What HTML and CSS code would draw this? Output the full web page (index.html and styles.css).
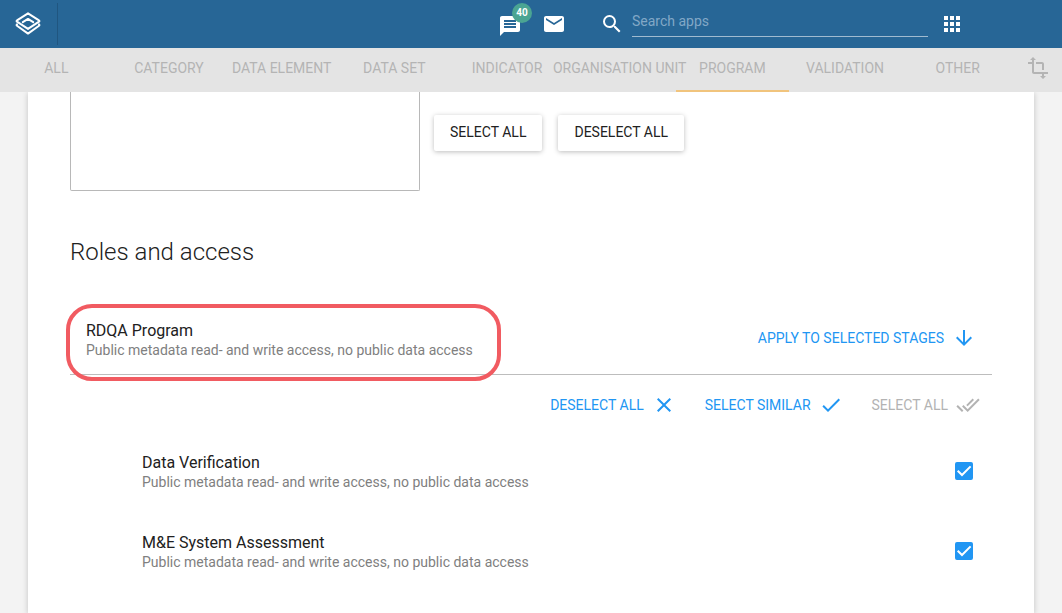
FILE: index.html
```html
<!DOCTYPE html>
<html lang="en">
<head>
<meta charset="utf-8">
<title>Metadata dependency export</title>
<link rel="stylesheet" href="styles.css">
</head>
<body>
<header class="topbar">
  <a class="logo" href="#" aria-label="Home">
    <svg width="28" height="28" viewBox="0 0 28 28" fill="none" stroke="#fff" stroke-width="2" stroke-linejoin="round" stroke-linecap="round"><path d="M14 3.300 25 10.300a.8.8 0 0 1 0 1.400L14 18.900 3 11.700a.8.8 0 0 1 0-1.400Z"/><path d="M8.800 12.200 14 8.900l5.200 3.300"/><path d="M3 14.300a.8.8 0 0 0 0 1.400L14 23.600l11-7.900a.8.8 0 0 0 0-1.400"/></svg>
  </a>
  <nav class="tools">
    <a class="tool" href="#" aria-label="Messages">
      <svg width="24" height="24" viewBox="0 0 24 24" fill="#fff"><path d="M20 4H4c-1.100 0-2 .9-2 2v18l4-4h14c1.100 0 2-.9 2-2V6c0-1.100-.9-2-2-2zM6 11h12v2H6v-2zm12 5H6v-2h12v2zm0-6H6V8h12v2z"/></svg>
      <span class="badge">40</span>
    </a>
    <a class="tool" href="#" aria-label="Mail">
      <svg width="24" height="24" viewBox="0 0 24 24" fill="#fff"><path d="M20 4H4c-1.100 0-2 .9-2 2v12c0 1.100.9 2 2 2h16c1.100 0 2-.9 2-2V6c0-1.100-.9-2-2-2zm0 4-8 5-8-5V6l8 5 8-5v2z"/></svg>
    </a>
  </nav>
  <label class="search">
    <svg width="24" height="24" viewBox="0 0 24 24" fill="#fff"><path d="M15.500 14h-.79l-.28-.27A6.471 6.471 0 0 0 16 9.500 6.500 6.500 0 1 0 9.500 16c1.610 0 3.090-.59 4.230-1.570l.27.28v.79l5 4.990L20.490 19l-4.990-5zm-6 0C7.010 14 5 11.990 5 9.500S7.010 5 9.500 5 14 7.010 14 9.500 11.990 14 9.500 14z"/></svg>
    <input class="search-input" type="text" placeholder="Search apps" aria-label="Search apps">
  </label>
  <button class="apps" aria-label="Apps">
    <svg width="24" height="24" viewBox="0 0 24 24" fill="#fff"><path d="M4 8h4V4H4v4zm6 12h4v-4h-4v4zm-6 0h4v-4H4v4zm0-6h4v-4H4v4zm6 0h4v-4h-4v4zm6-10v4h4V4h-4zm-6 4h4V4h-4v4zm6 6h4v-4h-4v4zm0 6h4v-4h-4v4z"/></svg>
  </button>
</header>
<nav class="tabs">
  <button class="tab">ALL</button>
  <button class="tab">CATEGORY</button>
  <button class="tab">DATA ELEMENT</button>
  <button class="tab">DATA SET</button>
  <button class="tab">INDICATOR</button>
  <button class="tab">ORGANISATION UNIT</button>
  <button class="tab tab-active">PROGRAM</button>
  <button class="tab">VALIDATION</button>
  <button class="tab">OTHER</button>
  <button class="transform" aria-label="Transform">
    <svg width="24" height="24" viewBox="0 0 24 24" fill="#b4b4b4"><path d="M22 18v-2H8V4h2L7 1 4 4h2v2H2v2h4v8c0 1.100.9 2 2 2h8v2h-2l3 3 3-3h-2v-2h4zM10 8h6v6h2V8c0-1.100-.9-2-2-2h-6v2z"/></svg>
  </button>
</nav>
<main class="card">
  <div class="picker">
    <select class="picker-list" multiple aria-label="Assigned items"></select>
    <div class="picker-actions">
      <button class="raised">SELECT ALL</button>
      <button class="raised">DESELECT ALL</button>
    </div>
  </div>
  <h1 class="heading">Roles and access</h1>
  <section class="program">
    <div class="info">
      <div class="name">RDQA Program</div>
      <div class="detail">Public metadata read- and write access, no public data access</div>
    </div>
    <button class="flat">APPLY TO SELECTED STAGES
      <svg width="24" height="24" viewBox="0 0 24 24" fill="currentColor"><path d="M20 12l-1.410-1.410L13 16.170V4h-2v12.170l-5.580-5.590L4 12l8 8 8-8z"/></svg>
    </button>
    <div class="highlight"></div>
  </section>
  <div class="bulk">
    <button class="flat">DESELECT ALL
      <svg width="24" height="24" viewBox="0 0 24 24" fill="currentColor"><path d="M19 6.410 17.590 5 12 10.590 6.410 5 5 6.410 10.590 12 5 17.590 6.410 19 12 13.410 17.590 19 19 17.590 13.410 12z"/></svg>
    </button>
    <button class="flat">SELECT SIMILAR
      <svg width="24" height="24" viewBox="0 0 24 24" fill="currentColor"><path d="M9 16.170 4.830 12l-1.420 1.410L9 19 21 7l-1.410-1.410z"/></svg>
    </button>
    <button class="flat" disabled>SELECT ALL
      <svg width="24" height="24" viewBox="0 0 24 24" fill="currentColor"><path d="M18 7l-1.410-1.410-6.340 6.340 1.410 1.410L18 7zm4.240-1.410L11.660 16.170 7.480 12l-1.410 1.410L11.660 19l12-12-1.420-1.410zM.41 13.410 6 19l1.410-1.410L1.830 12 .41 13.410z"/></svg>
    </button>
  </div>
  <div class="stages">
    <label class="stage">
      <span class="info">
        <span class="name">Data Verification</span>
        <span class="detail">Public metadata read- and write access, no public data access</span>
      </span>
      <span class="check">
        <input class="check-input" type="checkbox" checked>
        <svg class="check-mark" width="18" height="18" viewBox="0 0 18 18" fill="none" stroke="#fff" stroke-width="2"><path d="M2.700 8.700 7 13l8.600-8.600"/></svg>
      </span>
    </label>
    <label class="stage">
      <span class="info">
        <span class="name">M&amp;E System Assessment</span>
        <span class="detail">Public metadata read- and write access, no public data access</span>
      </span>
      <span class="check">
        <input class="check-input" type="checkbox" checked>
        <svg class="check-mark" width="18" height="18" viewBox="0 0 18 18" fill="none" stroke="#fff" stroke-width="2"><path d="M2.700 8.700 7 13l8.600-8.600"/></svg>
      </span>
    </label>
  </div>
</main>
</body>
</html>
```
FILE: styles.css
```css
* { box-sizing: border-box; }
html, body { height: 100%; }
body {
  margin: 0;
  display: flex;
  flex-direction: column;
  overflow: hidden;
  background: #f3f3f3;
  color: #212121;
  font: 14px/20px Roboto, sans-serif;
}
button {
  margin: 0;
  padding: 0;
  border: 0;
  background: none;
  color: inherit;
  font: inherit;
  cursor: pointer;
}
svg { display: block; flex: none; }

.topbar {
  flex: none;
  display: flex;
  align-items: center;
  height: 48px;
  padding-right: 98px;
  background: #276696;
}
.logo {
  display: flex;
  align-items: center;
  height: 42px;
  padding: 0 15px 0 14px;
  border-right: 1px solid #205680;
}
.tools { display: flex; gap: 20px; margin-left: auto; }
.tool { position: relative; }
.badge {
  position: absolute;
  top: -9px;
  left: 14px;
  width: 20px;
  height: 20px;
  border-radius: 50%;
  background: #4ba593;
  color: #fff;
  font-size: 10px;
  font-weight: 700;
  text-align: center;
}
.search { display: flex; align-items: center; gap: 8px; margin: 0 12px 0 34px; }
.search-input {
  width: 296px;
  height: 32px;
  margin-bottom: 6px;
  padding: 0;
  border: 0;
  border-bottom: 1px solid #a0bbd0;
  outline: 0;
  background: none;
  color: #fff;
  font: inherit;
}
.search-input::placeholder { color: #82a8c6; opacity: 1; }

.tabs {
  position: relative;
  z-index: 1;
  flex: none;
  display: flex;
  height: 44px;
  background: #e4e4e4;
  color: #b4b4b4;
}
.tab {
  flex: 1 1 0;
  min-width: 0;
  padding-bottom: 2px;
  border-bottom: 2px solid transparent;
  white-space: nowrap;
  display: flex;
  align-items: center;
  justify-content: center;
}
.tab-active { border-bottom-color: #f1c47d; }
.transform { width: 48px; padding: 0 12px 4px; }

.card {
  flex: 1 0 auto;
  margin: 0 28px;
  padding: 0 42px;
  background: #fff;
  box-shadow: 0 1px 6px rgba(0, 0, 0, .2);
}
.picker { display: flex; gap: 14px; }
.picker-list {
  width: 350px;
  height: 99px;
  padding: 0;
  border: 1px solid #b8b8b8;
  border-top: 0;
  border-radius: 0 0 2px 2px;
  background: #fff;
}
.picker-actions { display: flex; align-items: flex-start; gap: 16px; padding-top: 23px; }
.raised {
  height: 36px;
  padding: 0 16px 2px;
  border-radius: 2px;
  background: #fff;
  box-shadow: 0 1px 5px rgba(0, 0, 0, .26);
}
.heading {
  margin: 45px 0 0;
  font-size: 24px;
  font-weight: 300;
  line-height: 32px;
}
.program {
  position: relative;
  display: flex;
  align-items: flex-start;
  justify-content: space-between;
  margin-top: 36px;
  padding: 17px 16px 15px;
  border-bottom: 1px solid #bdbdbd;
}
.highlight {
  position: absolute;
  top: 0;
  left: -4px;
  width: 435px;
  height: 77px;
  border: 4px solid #f15b61;
  border-radius: 26px;
  pointer-events: none;
}
.name { display: block; font-size: 16px; }
.detail { display: block; color: #808080; line-height: 18px; }
.flat {
  display: flex;
  align-items: center;
  gap: 8px;
  height: 34px;
  color: #2196f3;
}
.flat:disabled { color: #b3b3b3; }
.bulk {
  display: flex;
  justify-content: flex-end;
  gap: 29px;
  padding: 13px 12px 0 0;
}
.stages { padding: 29px 19px 0 72px; }
.stage {
  display: flex;
  align-items: center;
  justify-content: space-between;
  height: 40px;
  margin-bottom: 40px;
}
.stage .info { padding-top: 2px; }
.check { position: relative; width: 18px; height: 18px; }
.check-input {
  appearance: none;
  display: block;
  width: 18px;
  height: 18px;
  margin: 0;
  border: 2px solid #757575;
  border-radius: 2px;
}
.check-input:checked { border-color: #2196f3; background: #2196f3; }
.check-mark { position: absolute; top: 0; left: 0; pointer-events: none; }
.check-input:not(:checked) + .check-mark { display: none; }
```
